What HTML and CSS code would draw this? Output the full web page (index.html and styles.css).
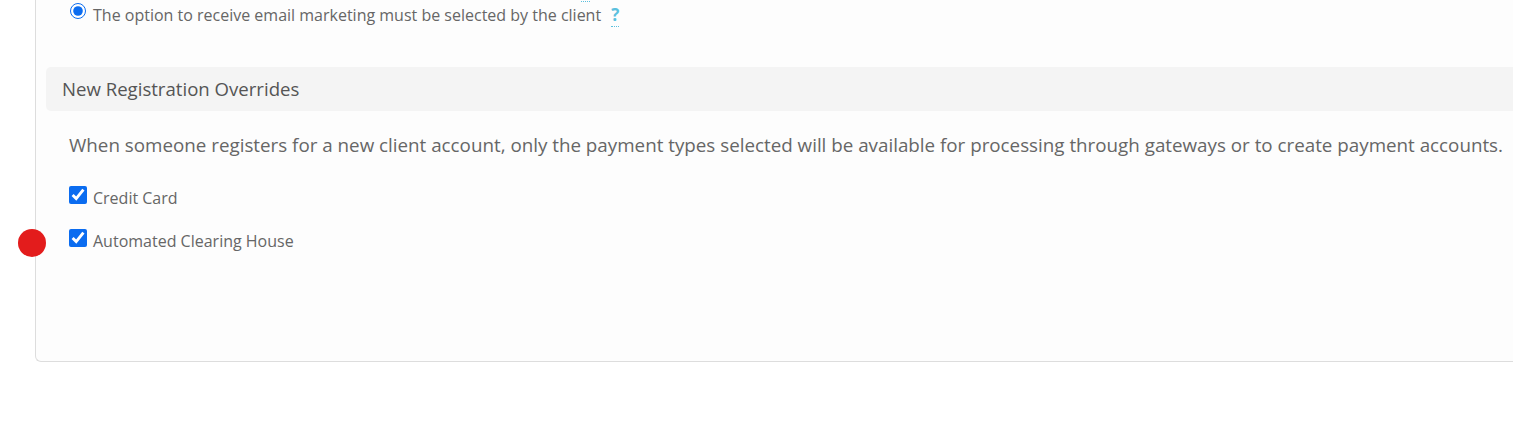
FILE: index.html
```html
<!DOCTYPE html>
<html lang="en">
<head>
    <meta charset="UTF-8">
    <meta name="viewport" content="width=device-width, initial-scale=1.0">
    <title>Client Registration Settings</title>
    <link rel="stylesheet" href="styles.css">
</head>
<body>
    <div class="panel">
        <div class="options">
            <label class="option">
                <input type="radio" name="marketing">
                <span>The option to receive email marketing will be selected by default</span>
                <span class="help">?</span>
            </label>
            <label class="option">
                <input type="radio" name="marketing" checked>
                <span>The option to receive email marketing must be selected by the client</span>
                <span class="help">?</span>
            </label>
        </div>

        <div class="section-title">New Registration Overrides</div>

        <p class="intro">When someone registers for a new client account, only the payment types selected will be available for processing through gateways or to create payment accounts.</p>

        <div class="checks">
            <label class="check">
                <input type="checkbox" checked>
                <span>Credit Card</span>
            </label>
            <label class="check">
                <input type="checkbox" checked>
                <span>Automated Clearing House</span>
                <span class="marker"></span>
            </label>
        </div>
    </div>
</body>
</html>
```

FILE: styles.css
```css
body {
    margin: 0;
    font-family: "Open Sans", Arial, sans-serif;
    background-color: #ffffff;
    color: #666666;
}

.panel {
    display: flow-root;
    margin-left: 35px;
    height: 361px;
    background-color: #fdfdfd;
    border-left: 1px solid #dddddd;
    border-bottom: 1px solid #dddddd;
    border-bottom-left-radius: 6px;
    padding-left: 10px;
}

.options {
    margin-top: -21px;
    padding-left: 24px;
}

.option {
    display: flex;
    align-items: flex-start;
    height: 25px;
    font-size: 16px;
    line-height: 22px;
    color: #666666;
}

.option input {
    width: 16px;
    height: 16px;
    margin: -1px 7px 0 0;
    accent-color: #0b6cf0;
}

.help {
    margin-left: 10px;
    color: #5bc0de;
    font-weight: 700;
    font-size: 17px;
    line-height: 22px;
    height: 22px;
    border-bottom: 1px dotted #5bc0de;
}

.section-title {
    margin-top: 38px;
    height: 44px;
    line-height: 44px;
    padding-left: 16px;
    background-color: #f4f4f4;
    border-radius: 5px 0 0 5px;
    font-size: 18.6px;
    color: #555555;
}

.intro {
    margin: 20px 0 0 23px;
    font-size: 18.8px;
    line-height: 28px;
    white-space: nowrap;
    color: #666666;
}

.checks {
    margin-top: 27px;
    padding-left: 23px;
}

.check {
    position: relative;
    display: flex;
    align-items: flex-start;
    height: 43px;
    font-size: 16px;
    line-height: 24px;
    color: #666666;
}

.check input {
    width: 18px;
    height: 18px;
    margin: 0 6px 0 0;
    accent-color: #0b6cf0;
}

.marker {
    position: absolute;
    left: -51px;
    top: 0;
    width: 28px;
    height: 28px;
    border-radius: 50%;
    background-color: #e31c1c;
}
```
